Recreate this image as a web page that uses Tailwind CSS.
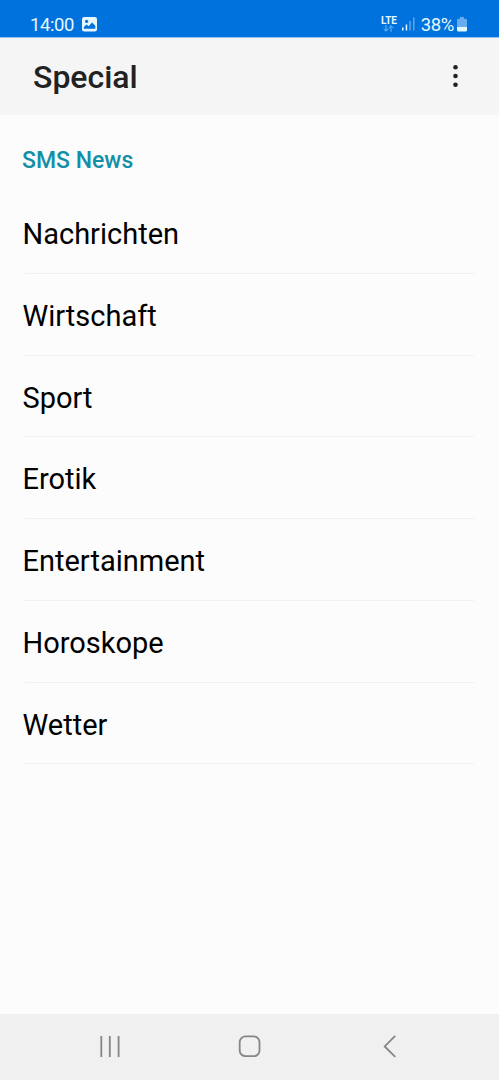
<!DOCTYPE html>
<html lang="de">

<head>
  <meta charset="UTF-8" />
  <meta name="viewport" content="width=device-width, initial-scale=1.0" />
  <title>Special</title>
  <script src="https://cdn.jsdelivr.net/npm/@tailwindcss/browser@4"></script>
</head>

<body class="flex h-screen flex-col overflow-hidden bg-[#fcfcfc] font-[Roboto,sans-serif] text-black">
  <!-- Status bar -->
  <div class="flex h-[37px] shrink-0 items-end justify-between bg-[#0072de] pr-8 pl-[30px] text-[#e4f7ff]">
    <div class="flex h-[27px] items-center gap-2">
      <span class="pt-[3px] text-[18.5px] leading-none tracking-[-0.4px]">14:00</span>
      <svg class="mt-[2px] h-[15px] w-[15px]" viewBox="0 0 15 15">
        <rect width="15" height="14.5" rx="2.2" fill="currentColor" />
        <circle cx="4.6" cy="4.4" r="1.6" fill="#0072de" />
        <path d="M1.8 11.8V10l2.8-2.4 2 1.7 3.5-3.8 3.2 3.3v3z" fill="#0072de" />
      </svg>
    </div>
    <div class="flex h-[27px] items-center">
      <div class="flex w-4 flex-col items-center">
        <span class="text-[10px] leading-[9px] font-bold tracking-[-0.2px]">LTE</span>
        <svg class="h-[7px] w-[11px] text-[#72b9f3]" viewBox="0 0 11 7" fill="none" stroke="currentColor"
          stroke-width="1">
          <path d="M3 .2v6M.6 3.8L3 6.2l2.4-2.4M8 6.8v-6M5.6 3.2L8 .8l2.4 2.4" />
        </svg>
      </div>
      <svg class="ml-[5px] h-[14px] w-[13px]" viewBox="0 0 13 14" fill="currentColor">
        <rect y="10.5" width="1.5" height="3" />
        <rect x="3.7" y="7.5" width="1.5" height="6" />
        <rect x="7.3" y="4" width="1.5" height="9.5" opacity=".4" />
        <rect x="11" y=".5" width="1.5" height="13" opacity=".4" />
      </svg>
      <span class="ml-[6px] pt-[3px] text-[18.5px] leading-none tracking-[-0.4px]">38%</span>
      <svg class="mt-px ml-[3px] h-[15px] w-[10px]" viewBox="0 0 10 15" fill="currentColor">
        <path d="M3 0h4v1.7h1.5A1.5 1.5 0 0 1 10 3.2V10H0V3.2a1.5 1.5 0 0 1 1.5-1.5H3z" opacity=".45" />
        <path d="M0 10h10v3a1.5 1.5 0 0 1-1.5 1.5h-7A1.5 1.5 0 0 1 0 13z" />
      </svg>
    </div>
  </div>

  <!-- App bar -->
  <header class="flex h-[78px] shrink-0 items-center justify-between border-t border-[#93c2ef] bg-[#f5f5f5] pr-10 pl-[33px]">
    <h1 class="pt-px text-[32px] leading-10 font-medium text-[#222]">Special</h1>
    <button class="pb-px" aria-label="Menü">
      <svg class="h-6 w-[7px]" viewBox="0 0 7 24" fill="#222">
        <circle cx="3.5" cy="3.3" r="2.3" />
        <circle cx="3.5" cy="12" r="2.3" />
        <circle cx="3.5" cy="20.7" r="2.3" />
      </svg>
    </button>
  </header>

  <!-- News list -->
  <main class="flex-1">
    <h2 class="flex h-[77px] items-center pt-3.5 pl-[22px] text-[23px] leading-7 font-medium text-[#138fa7]">SMS News</h2>
    <ul class="px-[25px] text-[29px]">
      <li class="flex h-[81.75px] items-center border-b border-[#f0f0f0] pt-[5px]"><span class="-ml-[2.5px]">Nachrichten</span></li>
      <li class="flex h-[81.75px] items-center border-b border-[#f0f0f0] pt-[5px]"><span class="-ml-[2.5px]">Wirtschaft</span></li>
      <li class="flex h-[81.75px] items-center border-b border-[#f0f0f0] pt-[5px]"><span class="-ml-[2.5px]">Sport</span></li>
      <li class="flex h-[81.75px] items-center border-b border-[#f0f0f0] pt-[5px]"><span class="-ml-[2.5px]">Erotik</span></li>
      <li class="flex h-[81.75px] items-center border-b border-[#f0f0f0] pt-[5px]"><span class="-ml-[2.5px]">Entertainment</span></li>
      <li class="flex h-[81.75px] items-center border-b border-[#f0f0f0] pt-[5px]"><span class="-ml-[2.5px]">Horoskope</span></li>
      <li class="flex h-[81.75px] items-center border-b border-[#f0f0f0] pt-[5px]"><span class="-ml-[2.5px]">Wetter</span></li>
    </ul>
  </main>

  <!-- Navigation bar -->
  <nav class="flex h-[66px] shrink-0 items-center justify-between bg-[#f0f0f0] px-[98px] text-[#858585]">
    <svg class="h-6 w-6" viewBox="0 0 24 24" fill="none" stroke="currentColor" stroke-width="1.8">
      <path d="M3.3 1v21M11.8 1v21M20.6 1v21" />
    </svg>
    <svg class="h-6 w-6" viewBox="0 0 24 24" fill="none" stroke="currentColor" stroke-width="1.8">
      <rect x="1.7" y="1.4" width="19.8" height="19.8" rx="5.8" />
    </svg>
    <svg class="h-6 w-6" viewBox="0 0 24 24" fill="none" stroke="currentColor" stroke-width="1.8">
      <path d="M18.2.9L7.7 11.4l10.5 10.5" />
    </svg>
  </nav>
</body>

</html>
